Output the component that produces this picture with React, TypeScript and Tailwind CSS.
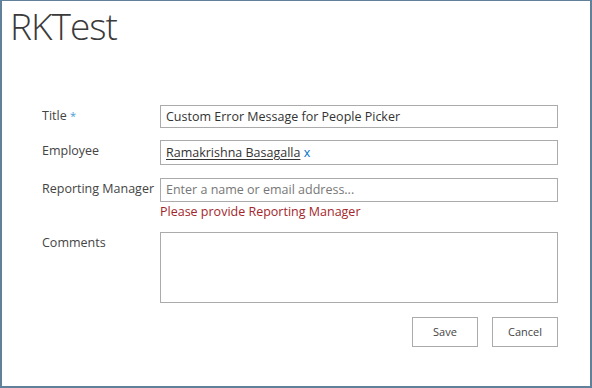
import React from 'react'

const font = { fontFamily: '"Open Sans", "Noto Sans", sans-serif' }

function Label({ children }: { children: React.ReactNode }) {
  return <div className="w-[118px] shrink-0 pt-[2px] text-[12.5px] leading-[18px] text-[#444]">{children}</div>
}

export default function App() {
  return (
    <div
      className="w-[592px] h-[388px] bg-white border-t border-l-2 border-r-2 border-b-2 border-[#61809a] overflow-hidden"
      style={font}
    >
      <h1 className="ml-[8px] mt-[2px] text-[37px] leading-[46px] font-light tracking-[-1px] text-[#3a3a3a]">
        RKTest
      </h1>

      <div className="ml-[40px] mt-[56px] w-[516px] flex flex-col">
        {/* Title */}
        <div className="flex">
          <Label>
            Title <span className="text-[#4a9bd6] text-[11px] align-top">*</span>
          </Label>
          <div className="flex-1 h-[23px] border border-[#ababab] px-[5px] text-[12.5px] leading-[21px] text-[#333]">
            Custom Error Message for People Picker
          </div>
        </div>

        {/* Employee */}
        <div className="flex mt-[12px]">
          <Label>Employee</Label>
          <div className="flex-1 h-[25px] border border-[#ababab] px-[5px] text-[12.5px] leading-[23px] text-[#333]">
            <span className="underline underline-offset-2">Ramakrishna Basagalla</span>
            <span className="text-[#0072c6]"> x</span>
          </div>
        </div>

        {/* Reporting Manager */}
        <div className="flex mt-[13px]">
          <Label>Reporting Manager</Label>
          <div className="flex-1">
            <div className="h-[24px] border border-[#ababab] px-[5px] text-[12.5px] leading-[22px] text-[#777]">
              Enter a name or email address...
            </div>
            <div className="text-[12.5px] leading-[20px] text-[#a4262c]">Please provide Reporting Manager</div>
          </div>
        </div>

        {/* Comments */}
        <div className="flex mt-[10px]">
          <Label>Comments</Label>
          <div className="flex-1 h-[71px] border border-[#ababab]" />
        </div>

        <div className="flex justify-end gap-[14px] mt-[14px]">
          <button className="w-[66px] h-[30px] border border-[#ababab] bg-white text-[11px] text-[#444]">Save</button>
          <button className="w-[66px] h-[30px] border border-[#ababab] bg-white text-[11px] text-[#444]">Cancel</button>
        </div>
      </div>
    </div>
  )
}
